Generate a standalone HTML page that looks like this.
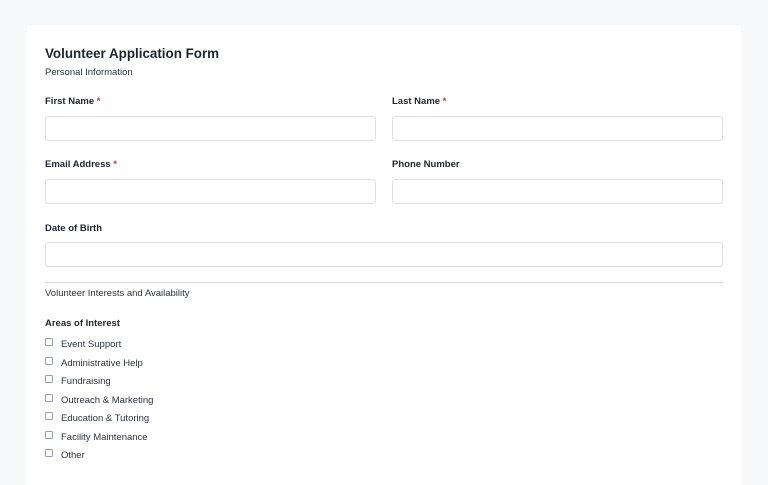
<!DOCTYPE html>
<html><head><style>
body{margin:0;width:768px;height:475px;background:#f8f9fb;font-family:"Liberation Sans",sans-serif;color:#1f2430;overflow:hidden;position:relative}
.card{position:absolute;left:27px;top:25px;width:714px;height:460px;background:#fff}
.a{position:absolute}
h1{position:absolute;left:45px;top:46px;margin:0;font-size:13.4px;font-weight:bold;color:#1f2430}
.sub{font-size:9.5px;color:#2d3340}
.lbl{font-size:9.5px;font-weight:bold;color:#1f2430}
.req{color:#d32f2f}
.in{position:absolute;border:1px solid #dde0e6;border-radius:3px;background:#fff;box-sizing:border-box;height:25px}
.cb{position:absolute;left:45px;font-size:9.5px;color:#2d3340}
.cb i{display:inline-block;width:6px;height:6px;border:1px solid #9aa0aa;border-radius:1.5px;margin-right:8px;vertical-align:1px}
</style></head><body>
<div class="card"></div>
<h1>Volunteer Application Form</h1>
<div class="a sub" style="left:45px;top:67px">Personal Information</div>
<div class="a lbl" style="left:45px;top:96px">First Name <span class="req">*</span></div>
<div class="a lbl" style="left:392px;top:96px">Last Name <span class="req">*</span></div>
<div class="in" style="left:45px;top:116px;width:331px"></div>
<div class="in" style="left:392px;top:116px;width:331px"></div>
<div class="a lbl" style="left:45px;top:159px">Email Address <span class="req">*</span></div>
<div class="a lbl" style="left:392px;top:159px">Phone Number</div>
<div class="in" style="left:45px;top:179px;width:331px"></div>
<div class="in" style="left:392px;top:179px;width:331px"></div>
<div class="a lbl" style="left:45px;top:223px">Date of Birth</div>
<div class="in" style="left:45px;top:242px;width:678px"></div>
<div class="a" style="left:45px;top:282px;width:678px;height:1px;background:#d6dae0"></div>
<div class="a sub" style="left:45px;top:288px">Volunteer Interests and Availability</div>
<div class="a lbl" style="left:45px;top:318px">Areas of Interest</div>
<div class="cb" style="top:338px"><i></i>Event Support</div>
<div class="cb" style="top:357px"><i></i>Administrative Help</div>
<div class="cb" style="top:375px"><i></i>Fundraising</div>
<div class="cb" style="top:394px"><i></i>Outreach &amp; Marketing</div>
<div class="cb" style="top:412px"><i></i>Education &amp; Tutoring</div>
<div class="cb" style="top:431px"><i></i>Facility Maintenance</div>
<div class="cb" style="top:449px"><i></i>Other</div>
</body></html>
